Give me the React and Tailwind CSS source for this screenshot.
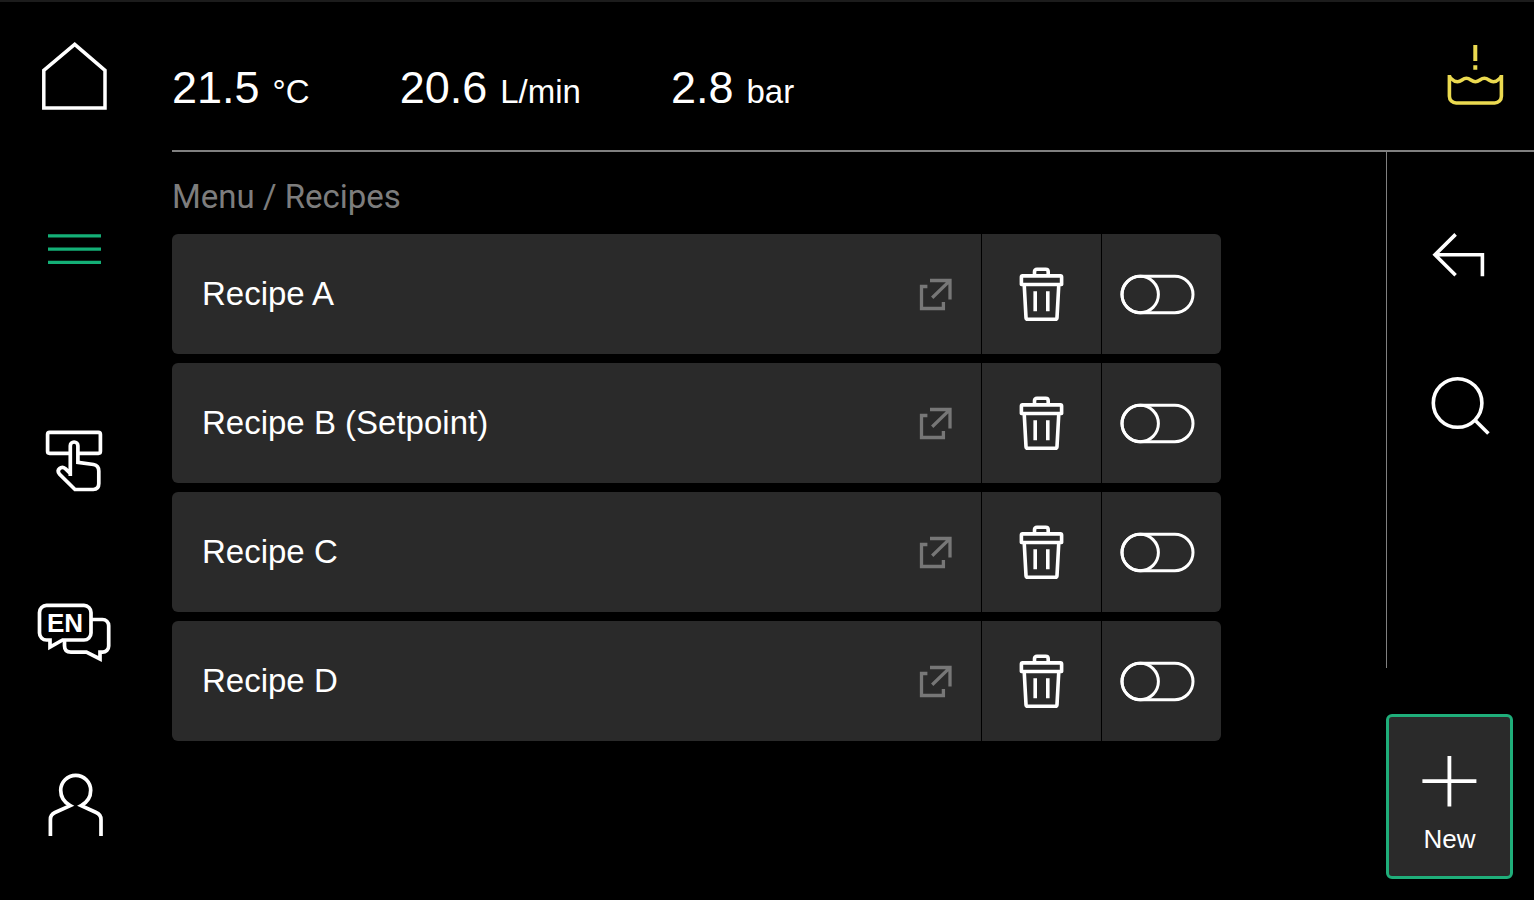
import { useState } from "react"

const readings = [
  { value: "21.5", unit: "°C" },
  { value: "20.6", unit: "L/min" },
  { value: "2.8", unit: "bar" },
]

const initialRecipes = [
  { id: "a", name: "Recipe A", active: false },
  { id: "b", name: "Recipe B (Setpoint)", active: false },
  { id: "c", name: "Recipe C", active: false },
  { id: "d", name: "Recipe D", active: false },
]

function HomeIcon() {
  return (
    <svg width="80" height="80" viewBox="0 0 80 80" fill="none" stroke="currentColor" strokeWidth="3.5">
      <path d="M9.8 34.3 40.7 8.3 71 34.3V72H9.8Z" />
    </svg>
  )
}

function MenuIcon() {
  return (
    <svg width="80" height="80" viewBox="0 0 80 80" fill="none" stroke="currentColor" strokeWidth="3.2">
      <path d="M14 27.8h53M14 41.2h53M14 54.4h53" />
    </svg>
  )
}

function TouchIcon() {
  return (
    <svg width="80" height="80" viewBox="0 0 80 80" fill="none" stroke="currentColor" strokeWidth="3.7">
      <path d="M36 33.3H15.6a2 2 0 0 1-2-2V14.4a2 2 0 0 1 2-2h48.8a2 2 0 0 1 2 2v16.9a2 2 0 0 1-2 2H44" />
      <path d="M36.3 56V25.8a3.8 3.8 0 0 1 7.6 0V42.3L59.5 44.5Q64.8 45.5 64.8 51V63.6q0 5.9-5.6 5.9H41L25.4 54C22 49.5 27.4 45.5 31.4 48.6L36.3 53.5" />
    </svg>
  )
}

function LanguageIcon() {
  return (
    <svg width="80" height="80" viewBox="0 0 80 80" fill="none" stroke="currentColor" strokeWidth="3.7">
      <path d="M12.5 13.4H50a7 7 0 0 1 7 7V41a7 7 0 0 1-7 7H28.6L16 55V48H12.5a7 7 0 0 1-7-7V20.4a7 7 0 0 1 7-7Z" />
      <path d="M57 27.5H68.5a6.2 6.2 0 0 1 6.2 6.2V54a6.2 6.2 0 0 1-6.2 6.2H66V67L52.4 60.2H37q-6.5 0-6.5-6.5V48" />
      <text x="13" y="40" fill="currentColor" stroke="none" className="text-[26px] font-bold">
        EN
      </text>
    </svg>
  )
}

function UserIcon() {
  return (
    <svg width="80" height="80" viewBox="0 0 80 80" fill="none" stroke="currentColor" strokeWidth="3.7">
      <path d="M16.4 72V55.5C16.4 51.5 18 49.8 21 48.5L36.2 41.6C30.5 38.5 26.7 33 26.7 26.3A15 15 0 0 1 56.7 26.3C56.7 33 53 38.5 47.2 41.6L62.2 48.5C65.2 49.8 67 51.5 67 55.5V72" />
    </svg>
  )
}

function WaterWarningIcon() {
  return (
    <svg width="64" height="64" viewBox="0 0 64 64" fill="none" stroke="currentColor" strokeWidth="3.6">
      <path d="M32.3 1V17M32.3 21.3V25.7" strokeWidth="4" />
      <path d="M6.4 31V52.3a6.7 6.7 0 0 0 6.7 6.7H51.7a6.7 6.7 0 0 0 6.7-6.7V31" />
      <path d="M6.4 33C9 35 10.5 37.8 14.5 37.8S19.5 34.2 23.4 34.2 28.5 37.8 32.4 37.8 37.5 34.2 41.4 34.2 46.5 37.8 50.4 37.8 55.8 35 58.4 33" />
    </svg>
  )
}

function BackIcon() {
  return (
    <svg width="64" height="64" viewBox="0 0 64 64" fill="none" stroke="currentColor" strokeWidth="3.6">
      <path d="M26.6 12.4 6 32.8 26.6 53.2M6 32.8H53.4V54.3" />
    </svg>
  )
}

function SearchIcon() {
  return (
    <svg width="64" height="64" viewBox="0 0 64 64" fill="none" stroke="currentColor" strokeWidth="3.6">
      <circle cx="28.6" cy="31" r="24.3" />
      <path d="M45.8 48 59.4 61.6" />
    </svg>
  )
}

function OpenIcon() {
  return (
    <svg width="34" height="34" viewBox="0 0 34 34" fill="none" stroke="currentColor" strokeWidth="3.3">
      <path d="M8.4 9.5H2.5V31.5H24.4V25" />
      <path d="M11 3.5H31V22.6M13.2 20.8 30.6 3.9" />
    </svg>
  )
}

function TrashIcon() {
  return (
    <svg width="49" height="60" viewBox="0 0 49 60" fill="none" stroke="currentColor" strokeWidth="3.6" strokeLinejoin="round">
      <path d="M17.5 12V7.8q0-2.5 2.5-2.5h8.7q2.5 0 2.5 2.5v4.2" />
      <path d="M4.4 20.5V13.1q0-1.2 1.2-1.2H43.4q1.2 0 1.2 1.2V20.5Z" />
      <path d="M7.2 20.5 9 53.6q.1 1.7 1.8 1.7H38.2q1.7 0 1.8-1.7L41.8 20.5" />
      <path d="M18.2 27.3V47.3M30.8 27.3V47.3" />
    </svg>
  )
}

function PlusIcon() {
  return (
    <svg width="56" height="52" viewBox="0 0 56 52" fill="none" stroke="currentColor" strokeWidth="3.8">
      <path d="M.4 26.2H54.4M27.4 1V51.4" />
    </svg>
  )
}

function Toggle({ label, checked, onChange }) {
  return (
    <label className="flex w-[119px] cursor-pointer items-center justify-center rounded-r-md bg-[#2a2a2a] pr-2">
      <input type="checkbox" role="switch" className="sr-only" aria-label={label} checked={checked} onChange={onChange} />
      <svg width="75" height="42" viewBox="0 0 75 42" fill="none" stroke="currentColor" strokeWidth="3">
        <rect x="2" y="3.3" width="71" height="36.4" rx="18.2" />
        <circle cx={checked ? 54.8 : 20.2} cy="21.5" r="18.2" />
      </svg>
    </label>
  )
}

function RecipeRow({ recipe, onToggle, onDelete }) {
  return (
    <li className="flex h-[120px] gap-px">
      <button type="button" className="flex flex-1 items-center justify-between rounded-l-md bg-[#2a2a2a] pr-7 pl-[30px] text-left text-[33px]">
        {recipe.name}
        <span className="text-[#777777]">
          <OpenIcon />
        </span>
      </button>
      <button type="button" aria-label={`Delete ${recipe.name}`} onClick={onDelete} className="flex w-[119px] items-center justify-center bg-[#2a2a2a]">
        <TrashIcon />
      </button>
      <Toggle label={`Activate ${recipe.name}`} checked={recipe.active} onChange={onToggle} />
    </li>
  )
}

export default function App() {
  const [recipes, setRecipes] = useState(initialRecipes)

  const toggleRecipe = (id) => setRecipes(recipes.map((r) => (r.id === id ? { ...r, active: !r.active } : r)))
  const deleteRecipe = (id) => setRecipes(recipes.filter((r) => r.id !== id))

  return (
    <div className="flex min-h-screen border-t-2 border-[#1c1c1c] bg-black font-['Liberation_Sans',Arial,sans-serif] text-white">
      <nav className="mr-6 flex w-37 shrink-0 flex-col items-center gap-[92px] pt-[34px]">
        <button type="button" aria-label="Home">
          <HomeIcon />
        </button>
        <button type="button" aria-label="Menu" className="mb-10 text-[#14b077]">
          <MenuIcon />
        </button>
        <button type="button" aria-label="Manual control">
          <TouchIcon />
        </button>
        <button type="button" aria-label="Language">
          <LanguageIcon />
        </button>
        <button type="button" aria-label="User">
          <UserIcon />
        </button>
      </nav>

      <div className="flex min-w-0 flex-1 flex-col">
        <header className="flex h-[150px] items-center justify-between border-b-2 border-[#808080] pr-[27px]">
          <dl className="flex gap-[90px] pt-6">
            {readings.map((r) => (
              <div key={r.unit} className="flex items-baseline gap-[13px]">
                <dd className="text-[45px]">{r.value}</dd>
                <dt className="text-[33px]">{r.unit}</dt>
              </div>
            ))}
          </dl>
          <button type="button" aria-label="Water level warning" className="text-[#ebda50]">
            <WaterWarningIcon />
          </button>
        </header>

        <div className="flex flex-1">
          <main className="min-w-0 flex-1 pr-[165px]">
            <h1 className="pt-[25px] pb-[17px] font-[Roboto,sans-serif] text-[33px] leading-10 text-[#7d7d7d]">Menu / Recipes</h1>
            <ul className="flex flex-col gap-[9px]">
              {recipes.map((recipe) => (
                <RecipeRow
                  key={recipe.id}
                  recipe={recipe}
                  onToggle={() => toggleRecipe(recipe.id)}
                  onDelete={() => deleteRecipe(recipe.id)}
                />
              ))}
            </ul>
          </main>

          <aside className="w-37 shrink-0">
            <div className="flex h-[516px] flex-col items-center gap-[86px] border-l border-[#808080] pt-[70px]">
              <button type="button" aria-label="Back">
                <BackIcon />
              </button>
              <button type="button" aria-label="Search">
                <SearchIcon />
              </button>
            </div>
            <button type="button" className="mt-[46px] flex h-[165px] w-[127px] flex-col items-center gap-[17px] rounded-md border-3 border-[#1fae7a] bg-[#2a2a2a] pt-[38px] text-[26px] leading-[30px]">
              <PlusIcon />
              New
            </button>
          </aside>
        </div>
      </div>
    </div>
  )
}
